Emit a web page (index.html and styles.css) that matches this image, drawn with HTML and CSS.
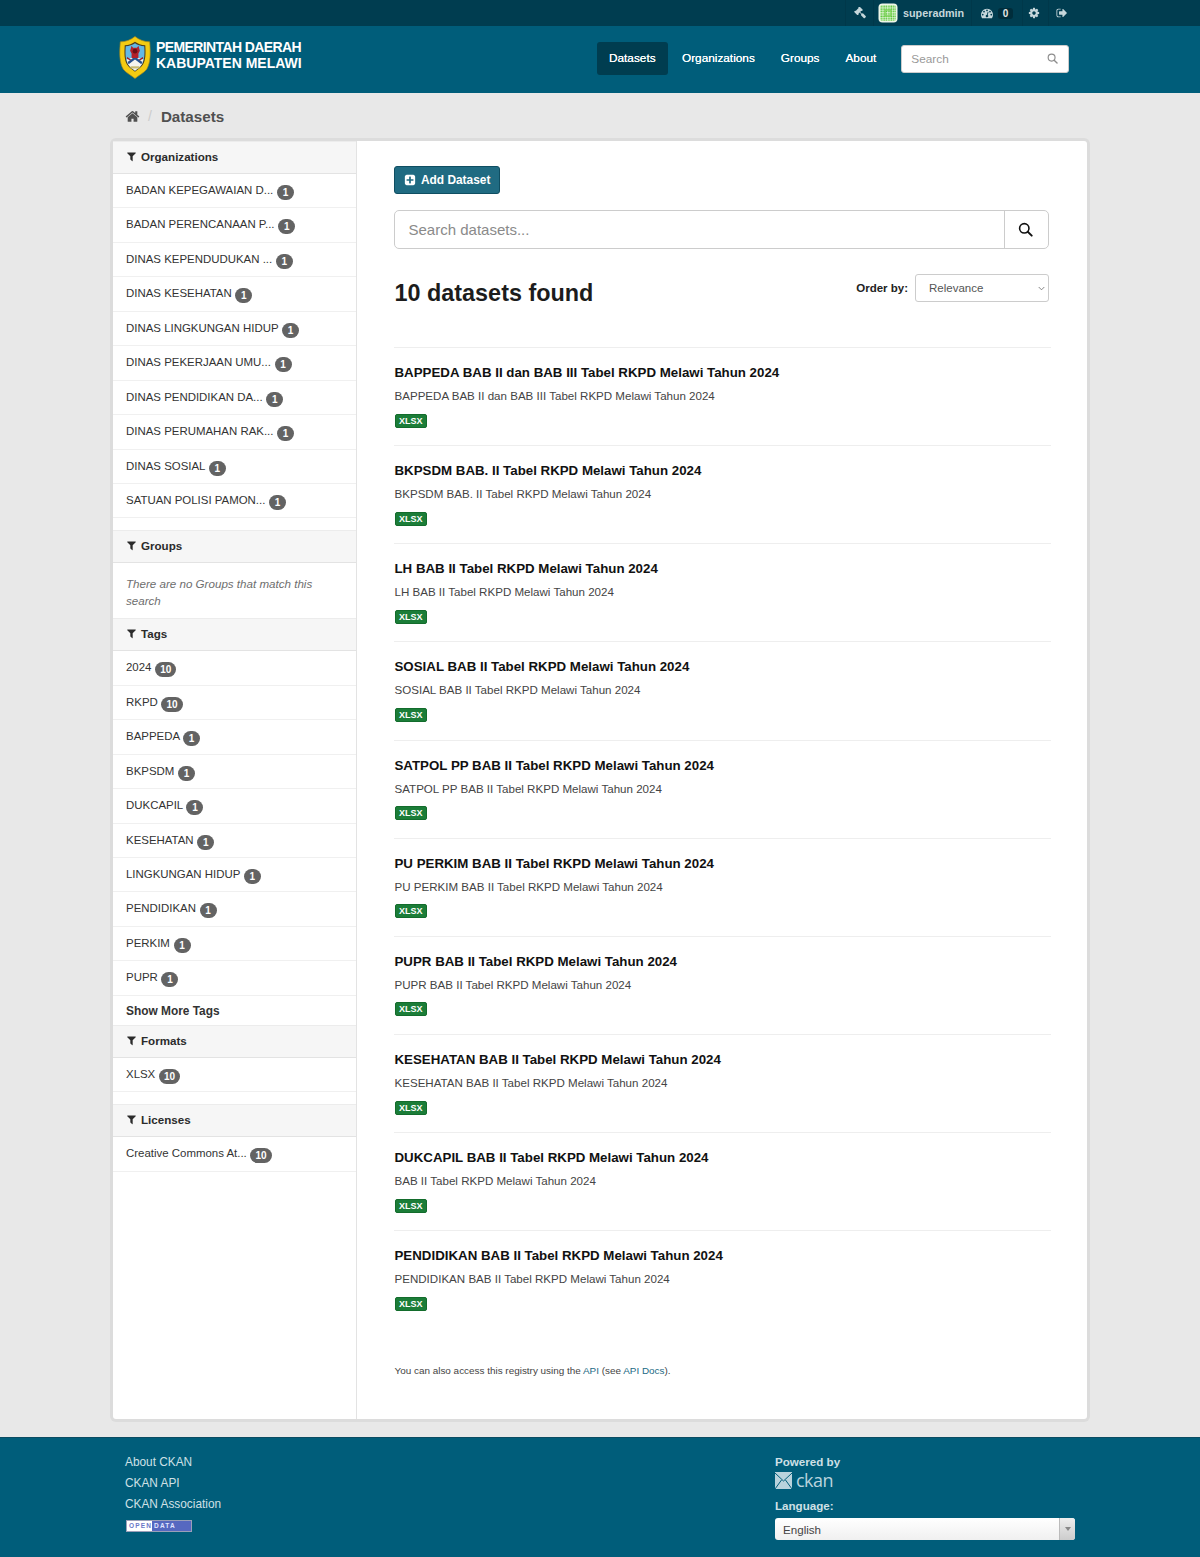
FILE: index.html
```html
<!DOCTYPE html>
<html lang="en">
<head>
<meta charset="utf-8">
<title>Datasets</title>
<link rel="stylesheet" href="styles.css">
</head>
<body>
<svg class="sprite" xmlns="http://www.w3.org/2000/svg">
<symbol id="i-filter" viewBox="0 0 1792 1792"><path d="M1595 295q17 41-14 70l-493 493v742q0 42-39 59-13 5-25 5-27 0-45-19l-256-256q-19-19-19-45v-486l-493-493q-31-29-14-70 17-39 59-39h1280q42 0 59 39z"/></symbol>
<symbol id="i-home" viewBox="0 0 1792 1792"><path d="M1472 992v480q0 26-19 45t-45 19h-384v-384h-256v384h-384q-26 0-45-19t-19-45v-480q0-1 .5-3t.5-3l575-474 575 474q1 2 1 6zm223-69l-62 74q-8 9-21 11h-3q-13 0-21-7l-692-577-692 577q-12 8-24 7-13-2-21-11l-62-74q-8-10-7-23.500t11-21.500l719-599q32-26 76-26t76 26l244 204v-195q0-14 9-23t23-9h192q14 0 23 9t9 23v408l219 182q10 8 11 21.500t-7 23.500z"/></symbol>
<symbol id="i-plus" viewBox="0 0 1792 1792"><path d="M1408 960v-128q0-26-19-45t-45-19h-320v-320q0-26-19-45t-45-19h-128q-26 0-45 19t-19 45v320h-320q-26 0-45 19t-19 45v128q0 26 19 45t45 19h320v320q0 26 19 45t45 19h128q26 0 45-19t19-45v-320h320q26 0 45-19t19-45zm256-544v960q0 119-84.500 203.500t-203.500 84.500h-960q-119 0-203.500-84.500t-84.500-203.500v-960q0-119 84.500-203.500t203.500-84.500h960q119 0 203.500 84.500t84.500 203.500z"/></symbol>
<symbol id="i-cog" viewBox="0 0 1792 1792"><path d="M1152 896q0-106-75-181t-181-75-181 75-75 181 75 181 181 75 181-75 75-181zm512-109v222q0 12-8 23t-20 13l-185 28q-19 54-39 91 35 50 107 138 10 12 10 25t-9 23q-27 37-99 108t-94 71q-12 0-26-9l-138-108q-44 23-91 38-16 136-29 186-7 28-36 28h-222q-14 0-24.500-8.500t-11.500-21.500l-28-184q-49-16-90-37l-141 107q-10 9-25 9-14 0-25-11-126-114-165-168-7-10-7-23 0-12 8-23 15-21 51-66.500t54-70.500q-27-50-41-99l-183-27q-13-2-21-12.500t-8-23.500v-222q0-12 8-23t19-13l186-28q14-46 39-92-40-57-107-138-10-12-10-24 0-10 9-23 26-36 98.500-107.500t94.500-71.500q13 0 26 10l138 107q44-23 91-38 16-136 29-186 7-28 36-28h222q14 0 24.500 8.500t11.500 21.500l28 184q49 16 90 37l142-107q9-9 24-9 13 0 25 10 129 119 165 170 7 8 7 22 0 12-8 23-15 21-51 66.500t-54 70.500q26 50 41 98l183 28q13 2 21 12.500t8 23.500z"/></symbol>
<symbol id="i-signout" viewBox="0 0 1792 1792"><path d="M704 1440q0 4 1 20t.5 26.500-3 23.500-10 19.500-20.500 6.500h-320q-119 0-203.500-84.500t-84.500-203.500v-704q0-119 84.500-203.500t203.500-84.500h320q13 0 22.500 9.500t9.500 22.500q0 4 1 20t.5 26.500-3 23.500-10 19.500-20.500 6.500h-320q-66 0-113 47t-47 113v704q0 66 47 113t113 47h312l11.500 1 11.500 3 8 5.500 7 9 2 13.500zm928-544q0 26-19 45l-544 544q-19 19-45 19t-45-19-19-45v-288h-448q-26 0-45-19t-19-45v-384q0-26 19-45t45-19h448v-288q0-26 19-45t45-19 45 19l544 544q19 19 19 45z"/></symbol>
<symbol id="i-dash" viewBox="0 0 1792 1792"><path d="M384 1152q0-53-37.500-90.500t-90.500-37.500-90.500 37.500-37.500 90.500 37.500 90.500 90.500 37.500 90.500-37.500 37.500-90.500zm192-448q0-53-37.500-90.500t-90.500-37.500-90.500 37.500-37.500 90.500 37.500 90.500 90.500 37.500 90.500-37.500 37.500-90.500zm428 481l101-382q6-26-7.500-48.500t-38.500-29.500-48 6.500-30 39.500l-101 382q-60 5-107 43.500t-63 98.500q-20 77 20 146t117 89 146-20 89-117q16-60-6-117t-72-91zm660-33q0-53-37.500-90.500t-90.500-37.500-90.500 37.500-37.500 90.500 37.500 90.500 90.500 37.500 90.500-37.500 37.500-90.500zm-640-640q0-53-37.500-90.500t-90.500-37.500-90.500 37.500-37.500 90.500 37.500 90.500 90.500 37.500 90.500-37.500 37.500-90.500zm448 192q0-53-37.500-90.500t-90.500-37.500-90.500 37.500-37.500 90.500 37.500 90.500 90.500 37.500 90.500-37.500 37.500-90.500zm320 448q0 261-141 483-19 29-54 29h-1402q-35 0-54-29-141-221-141-483 0-182 71-348t191-286 286-191 348-71 348 71 286 191 191 286 71 348z"/></symbol>
<symbol id="i-gavel" viewBox="0 0 1792 1792"><path d="M1771 1440q0 53-37 90l-107 108q-39 37-91 37-53 0-90-37l-363-364q-38-36-38-90 0-53 43-96l-256-256-126 126q-14 14-34 14t-34-14q2 2 12.500 12t12.500 13 10 11.500 10 13.500 6 13.500 5.500 16.500 1.500 18q0 38-28 68-3 3-16.500 18t-19 20.500-18.500 16.500-22 15.500-22 9-26 4.500q-40 0-68-28l-408-408q-28-28-28-68 0-13 4.500-26t9-22 15.500-22 16.500-18.500 20.500-19 18-16.500q30-28 68-28 10 0 18 1.500t16.500 5.500 13.500 6 13.500 10 11.500 10 13 12.500 12 12.500q-14-14-14-34t14-34l348-348q14-14 34-14t34 14q-2-2-12.500-12t-12.500-13-10-11.500-10-13.500-6-13.500-5.500-16.500-1.500-18q0-38 28-68 3-3 16.500-18t19-20.500 18.500-16.500 22-15.500 22-9 26-4.500q40 0 68 28l408 408q28 28 28 68 0 13-4.500 26t-9 22-15.500 22-16.500 18.500-20.500 19-18 16.500q-30 28-68 28-10 0-18-1.500t-16.500-5.500-13.500-6-13.500-10-11.500-10-13-12.500-12-12.500q14 14 14 34t-14 34l-126 126 256 256q43-43 96-43 52 0 91 37l363 363q37 39 37 91z"/></symbol>
<symbol id="i-search" viewBox="0 0 16 16"><circle cx="6.700" cy="6.700" r="5" fill="none" stroke="currentColor" stroke-width="1.700"/><path d="M10.400 10.400L14.600 14.600" fill="none" stroke="currentColor" stroke-width="2" stroke-linecap="round"/></symbol>
</svg>

<div class="account-bar">
  <div class="account-item"><svg class="ico ico-bar"><use href="#i-gavel"/></svg></div>
  <div class="account-item account-user">
    <svg class="avatar" viewBox="0 0 20 20">
      <defs><pattern id="dots" width="2.400" height="2.400" patternUnits="userSpaceOnUse" x="0.300" y="0.300"><rect width="2.400" height="2.400" fill="#f3fbec"/><rect x="0.300" y="0.300" width="1.600" height="1.600" fill="#3fbb1a"/></pattern></defs>
      <rect x=".5" y=".5" width="19" height="19" rx="4" fill="#eef6e8"/>
      <rect x="2" y="2" width="16" height="16" rx="2" fill="url(#dots)"/>
      <rect x="7" y="7" width="6" height="6" fill="none" stroke="#7fd45a" stroke-width="1.400"/>
    </svg>
    <span>superadmin</span>
  </div>
  <div class="account-item account-dash"><svg class="ico ico-bar"><use href="#i-dash"/></svg><span class="count">0</span></div>
  <div class="account-item account-cog"><svg class="ico ico-bar"><use href="#i-cog"/></svg></div>
  <div class="account-item account-out"><svg class="ico ico-bar"><use href="#i-signout"/></svg></div>
</div>

<header class="masthead">
  <div class="brand">
    <svg class="logo" viewBox="0 0 32 44">
      <path d="M1 6C6 6 12 4 16 .5c4 3.500 10 5.500 15 5.500 1 12 1 21-3 28-3 4-8 6-12 9.500-4-3.500-9-5.500-12-9.500C0 27 0 18 1 6z" fill="#f4cb12" stroke="#a98a1a" stroke-width=".7"/>
      <path d="M5.500 9.500c4 0 8-1.500 10.500-3.500 2.500 2 6.500 3.500 10.500 3.500 .5 9 .5 15-2.500 20-2 3-5 5-8 7-3-2-6-4-8-7-3-5-3-11-2.500-20z" fill="#4a3a1c"/>
      <path d="M6.500 10.500c3.500 0 7-1.300 9.500-3 2.500 1.700 6 3 9.500 3 .5 8 .3 14-2.400 18.500-1.900 3-4.500 4.800-7.100 6.500-2.600-1.700-5.200-3.500-7.100-6.500C6.200 24.500 6 18.500 6.500 10.500z" fill="#63b8e6"/>
      <path d="M7.500 24l8.500-3 8.500 3c-.4 2-.9 3.400-1.400 5-1.900 3-4.500 4.800-7.100 6.500-2.600-1.700-5.200-3.500-7.100-6.500-.5-1.600-1-3-1.400-5z" fill="#f6f3ee"/>
      <path d="M16 21l-7.500 5.500 1 2.500L16 24l6.500 5 1-2.500z" fill="#26508f"/>
      <path d="M8 21.500l4 2.500-1 1-3.500-2zM24 21.500l-4 2.500 1 1 3.500-2z" fill="#9c1f2a"/>
      <path d="M12.500 10l1.500 2h4l1.500-2 1.500 5-1.500 3v4.500h-7V18l-1.500-3z" fill="#b3202a"/>
      <circle cx="16" cy="15.500" r="2.400" fill="#6b0f18"/>
      <path d="M11.500 31h9v2.200h-9z" fill="#caba72"/>
    </svg>
    <div class="brand-text"><span class="brand-line1">PEMERINTAH DAERAH</span><br>KABUPATEN MELAWI</div>
  </div>
  <nav class="nav">
    <a class="nav-link nav-active">Datasets</a>
    <a class="nav-link">Organizations</a>
    <a class="nav-link">Groups</a>
    <a class="nav-link">About</a>
  </nav>
  <div class="site-search"><span>Search</span><svg class="ico ico-site"><use href="#i-search"/></svg></div>
</header>

<div class="page">
  <div class="crumbs">
    <svg class="ico ico-home"><use href="#i-home"/></svg>
    <span class="crumb-sep">/</span>
    <span class="crumb-current">Datasets</span>
  </div>

  <div class="wrapper">
    <aside class="sidebar">
      <h2 class="facet-head"><svg class="ico ico-filter"><use href="#i-filter"/></svg>Organizations</h2>
      <ul class="facet-list">
        <li class="facet-item">BADAN KEPEGAWAIAN D... <b class="pill">1</b></li>
        <li class="facet-item">BADAN PERENCANAAN P... <b class="pill">1</b></li>
        <li class="facet-item">DINAS KEPENDUDUKAN ... <b class="pill">1</b></li>
        <li class="facet-item">DINAS KESEHATAN <b class="pill">1</b></li>
        <li class="facet-item">DINAS LINGKUNGAN HIDUP <b class="pill">1</b></li>
        <li class="facet-item">DINAS PEKERJAAN UMU... <b class="pill">1</b></li>
        <li class="facet-item">DINAS PENDIDIKAN DA... <b class="pill">1</b></li>
        <li class="facet-item">DINAS PERUMAHAN RAK... <b class="pill">1</b></li>
        <li class="facet-item">DINAS SOSIAL <b class="pill">1</b></li>
        <li class="facet-item">SATUAN POLISI PAMON... <b class="pill">1</b></li>
      </ul>
      <h2 class="facet-head facet-spaced"><svg class="ico ico-filter"><use href="#i-filter"/></svg>Groups</h2>
      <p class="facet-empty">There are no Groups that match this search</p>
      <h2 class="facet-head"><svg class="ico ico-filter"><use href="#i-filter"/></svg>Tags</h2>
      <ul class="facet-list">
        <li class="facet-item">2024 <b class="pill">10</b></li>
        <li class="facet-item">RKPD <b class="pill">10</b></li>
        <li class="facet-item">BAPPEDA <b class="pill">1</b></li>
        <li class="facet-item">BKPSDM <b class="pill">1</b></li>
        <li class="facet-item">DUKCAPIL <b class="pill">1</b></li>
        <li class="facet-item">KESEHATAN <b class="pill">1</b></li>
        <li class="facet-item">LINGKUNGAN HIDUP <b class="pill">1</b></li>
        <li class="facet-item">PENDIDIKAN <b class="pill">1</b></li>
        <li class="facet-item">PERKIM <b class="pill">1</b></li>
        <li class="facet-item">PUPR <b class="pill">1</b></li>
      </ul>
      <div class="show-more">Show More Tags</div>
      <h2 class="facet-head"><svg class="ico ico-filter"><use href="#i-filter"/></svg>Formats</h2>
      <ul class="facet-list">
        <li class="facet-item">XLSX <b class="pill">10</b></li>
      </ul>
      <h2 class="facet-head facet-spaced"><svg class="ico ico-filter"><use href="#i-filter"/></svg>Licenses</h2>
      <ul class="facet-list">
        <li class="facet-item">Creative Commons At... <b class="pill">10</b></li>
      </ul>
    </aside>

    <main class="content">
      <a class="add-btn"><svg class="ico ico-plus"><use href="#i-plus"/></svg>Add Dataset</a>
      <div class="search-box">
        <span class="search-ph">Search datasets...</span>
        <span class="search-go"><svg class="ico ico-go"><use href="#i-search"/></svg></span>
      </div>
      <div class="results-head">
        <h1 class="results-title">10 datasets found</h1>
        <div class="order">
          <label class="order-label">Order by:</label>
          <div class="order-select">Relevance<svg class="chev" viewBox="0 0 8 5"><path d="M.8 .8L4 4l3.200-3.200" fill="none" stroke="#666" stroke-width=".9"/></svg></div>
        </div>
      </div>

      <article class="dataset"><h3 class="ds-title">BAPPEDA BAB II dan BAB III Tabel RKPD Melawi Tahun 2024</h3><p class="ds-desc">BAPPEDA BAB II dan BAB III Tabel RKPD Melawi Tahun 2024</p><span class="ds-badge">XLSX</span></article>
      <article class="dataset"><h3 class="ds-title">BKPSDM BAB. II Tabel RKPD Melawi Tahun 2024</h3><p class="ds-desc">BKPSDM BAB. II Tabel RKPD Melawi Tahun 2024</p><span class="ds-badge">XLSX</span></article>
      <article class="dataset"><h3 class="ds-title">LH BAB II Tabel RKPD Melawi Tahun 2024</h3><p class="ds-desc">LH BAB II Tabel RKPD Melawi Tahun 2024</p><span class="ds-badge">XLSX</span></article>
      <article class="dataset"><h3 class="ds-title">SOSIAL BAB II Tabel RKPD Melawi Tahun 2024</h3><p class="ds-desc">SOSIAL BAB II Tabel RKPD Melawi Tahun 2024</p><span class="ds-badge">XLSX</span></article>
      <article class="dataset"><h3 class="ds-title">SATPOL PP BAB II Tabel RKPD Melawi Tahun 2024</h3><p class="ds-desc">SATPOL PP BAB II Tabel RKPD Melawi Tahun 2024</p><span class="ds-badge">XLSX</span></article>
      <article class="dataset"><h3 class="ds-title">PU PERKIM BAB II Tabel RKPD Melawi Tahun 2024</h3><p class="ds-desc">PU PERKIM BAB II Tabel RKPD Melawi Tahun 2024</p><span class="ds-badge">XLSX</span></article>
      <article class="dataset"><h3 class="ds-title">PUPR BAB II Tabel RKPD Melawi Tahun 2024</h3><p class="ds-desc">PUPR BAB II Tabel RKPD Melawi Tahun 2024</p><span class="ds-badge">XLSX</span></article>
      <article class="dataset"><h3 class="ds-title">KESEHATAN BAB II Tabel RKPD Melawi Tahun 2024</h3><p class="ds-desc">KESEHATAN BAB II Tabel RKPD Melawi Tahun 2024</p><span class="ds-badge">XLSX</span></article>
      <article class="dataset"><h3 class="ds-title">DUKCAPIL BAB II Tabel RKPD Melawi Tahun 2024</h3><p class="ds-desc">BAB II Tabel RKPD Melawi Tahun 2024</p><span class="ds-badge">XLSX</span></article>
      <article class="dataset"><h3 class="ds-title">PENDIDIKAN BAB II Tabel RKPD Melawi Tahun 2024</h3><p class="ds-desc">PENDIDIKAN BAB II Tabel RKPD Melawi Tahun 2024</p><span class="ds-badge">XLSX</span></article>

      <p class="api-note">You can also access this registry using the <a class="api-link">API</a> (see <a class="api-link">API Docs</a>).</p>
    </main>
  </div>
</div>

<footer class="footer">
  <div class="foot-left">
    <a class="foot-link">About CKAN</a>
    <a class="foot-link">CKAN API</a>
    <a class="foot-link">CKAN Association</a>
    <div class="od-badge"><span class="od-open">OPEN</span><span class="od-data">DATA</span></div>
  </div>
  <div class="foot-right">
    <div class="foot-label">Powered by</div>
    <div class="ckan-logo">
      <svg class="ckan-mark" viewBox="0 0 17 17"><rect width="17" height="17" fill="#b9d3dd"/><path d="M0 1l8.500 8L17 1M0 17l6.500-9M17 17l-6.500-9" fill="none" stroke="#005d7a" stroke-width="1"/></svg>
      <span class="ckan-word">ckan</span>
    </div>
    <div class="foot-label foot-lang">Language:</div>
    <div class="lang-select"><span class="lang-value">English</span><span class="lang-arrow"><i class="tri"></i></span></div>
  </div>
</footer>
</body>
</html>
```

FILE: styles.css
```css
* { box-sizing: border-box; }
html, body { margin: 0; padding: 0; }
body {
  width: 1200px;
  height: 1557px;
  overflow: hidden;
  background: #e8e8e8;
  font-family: "Liberation Sans", Arial, sans-serif;
  font-size: 12px;
  color: #333;
}
.sprite { display: none; }
.ico { display: block; fill: currentColor; flex: none; }

.account-bar {
  height: 26px;
  background: #003d50;
  display: flex;
  justify-content: flex-end;
  padding-right: 125px;
  color: #c6d7db;
}
.account-item {
  height: 26px;
  display: flex;
  align-items: center;
  justify-content: center;
  border-left: 1px solid #00384a;
  width: 28px;
}
.account-user { width: 98px; justify-content: flex-start; padding-left: 4px; gap: 5px; font-size: 10.800px; font-weight: bold; }
.account-dash { width: 51px; gap: 5px; }
.account-cog { width: 26px; padding-right: 3px; }
.account-out { width: 27px; }
.ico-bar { width: 12px; height: 12px; }
.avatar { width: 20px; height: 20px; display: block; }
.count { background: #002d3b; color: #e6e6e6; font-size: 10px; font-weight: bold; border-radius: 3px; width: 15px; height: 11px; line-height: 11px; text-align: center; margin-top: 1px; }

.masthead {
  height: 67px;
  background: #005d7a;
  display: flex;
  align-items: flex-start;
  padding-left: 119px;
  color: #fff;
}
.brand { display: flex; align-items: flex-start; gap: 5px; width: 478px; margin-top: 10px; }
.logo { width: 32px; height: 43px; display: block; }
.brand-text { margin-top: 3px; font-size: 14px; line-height: 16px; font-weight: bold; color: #fff; white-space: nowrap; }
.brand-line1 { letter-spacing: -.6px; }
.nav { display: flex; gap: 0; align-items: center; margin-top: 16px; }
.nav-link {
  display: block;
  height: 33px;
  line-height: 33px;
  padding: 0 13px;
  border-radius: 3px;
  font-size: 11.800px;
  color: #fff;
  text-shadow: 0 0 .5px #fff;
}
.nav-active { background: #003d50; padding: 0 12px; margin-right: 1px; width: 71px; }
.site-search {
  margin: 19px 0 0 12px;
  width: 168px;
  height: 28px;
  background: #fff;
  border: 1px solid #ccc;
  border-radius: 3px;
  display: flex;
  align-items: center;
  justify-content: space-between;
  padding: 0 10px 1px 9px;
  color: #999;
  font-size: 11.800px;
}
.ico-site { width: 11px; height: 11px; color: #8d8d8d; }

.page { height: 1344px; width: 974px; margin-left: 113px; }
.crumbs { height: 48px; display: flex; align-items: center; padding: 0 0 2px 12px; }
.ico-home { width: 15px; height: 15px; color: #505050; }
.crumb-sep { color: #ccc; font-size: 14px; margin: 0 9px 0 8px; }
.crumb-current { font-size: 15.200px; font-weight: bold; color: #505050; }

.wrapper {
  height: 1278px;
  background: #fff;
  border-radius: 3px;
  box-shadow: 0 0 0 3px #dcdcdc;
  display: flex;
}
.sidebar { width: 244px; border-right: 1px solid #e3e3e3; flex: none; }
.facet-head {
  margin: 0;
  height: 33px;
  background: #f6f6f6;
  border-top: 1px solid #ececec;
  border-bottom: 1px solid #e3e3e3;
  padding: 0 0 2px 13px;
  display: flex;
  align-items: center;
  font-size: 11.600px;
  font-weight: bold;
  color: #2b2b2b;
}
.ico-filter { width: 11px; height: 11px; margin-right: 4px; color: #2b2b2b; }
.facet-spaced { margin-top: 12px; }
.facet-list { list-style: none; margin: 0; padding: 0; }
.facet-item {
  height: 34.440px;
  line-height: 32px;
  padding-left: 13px;
  border-bottom: 1px solid #f0f0f0;
  font-size: 11.450px;
  color: #333;
  white-space: nowrap;
}
.pill {
  display: inline-block;
  min-width: 17px;
  height: 15px;
  line-height: 15px;
  padding: 0 5px;
  margin-left: .5px;
  border-radius: 8px;
  background: #636363;
  color: #fff;
  font-size: 10px;
  text-align: center;
  vertical-align: -4px;
  position: relative;
  top: -2px;
}
.facet-empty {
  margin: 0;
  height: 55px;
  padding: 11.500px 13px 0;
  font-size: 11.600px;
  line-height: 17px;
  font-style: italic;
  color: #6e6e6e;
}
.show-more { height: 29px; line-height: 30px; padding-left: 13px; font-size: 11.900px; font-weight: bold; color: #333; }

.content { flex: 1; padding: 25px 38px 0 37px; min-width: 0; }
.add-btn {
  display: flex;
  align-items: center;
  width: 106px;
  height: 28px;
  padding-left: 9px;
  background: #206b82;
  border: 1px solid #0f4e62;
  border-radius: 3px;
  color: #fff;
  font-size: 11.900px;
  font-weight: bold;
}
.ico-plus { width: 12px; height: 12px; margin-right: 5px; }
.search-box {
  margin-top: 16px;
  height: 39px;
  border: 1px solid #ccc;
  border-radius: 5px;
  display: flex;
  align-items: center;
  justify-content: space-between;
}
.search-ph { padding-left: 13.500px; font-size: 15px; color: #8a8a8a; }
.search-go { width: 44px; height: 37px; border-left: 1px solid #ccc; display: flex; align-items: center; justify-content: center; padding-right: 2px; }
.ico-go { width: 15px; height: 15px; color: #111; }
.results-head { margin-top: 25px; height: 73px; display: flex; justify-content: space-between; align-items: flex-start; padding-left: .5px; }
.results-title { margin: 3.500px 0 0; font-size: 23.400px; line-height: 30px; font-weight: bold; color: #1c1c1c; }
.order { display: flex; align-items: center; gap: 7px; }
.order-label { font-size: 11.500px; font-weight: bold; color: #222; }
.order-select {
  width: 134px;
  height: 28px;
  border: 1px solid #ccc;
  border-radius: 3px;
  padding-left: 13px;
  line-height: 27px;
  font-size: 11.500px;
  color: #555;
  position: relative;
}
.chev { position: absolute; right: 3px; top: 11px; width: 7px; height: 5px; }

.dataset { height: 98.170px; border-top: 1px solid #eee; padding: 15px 0 0 .5px; margin-right: -2px; }
.ds-title { margin: 0; font-size: 13.300px; line-height: 20px; font-weight: bold; color: #111; }
.ds-desc { margin: 3px 0 0; font-size: 11.570px; line-height: 20px; color: #444; }
.ds-badge {
  display: block;
  margin-top: 7.500px;
  width: 32.500px;
  height: 14px;
  background: #1b7d38;
  border: 1px solid #136c2c;
  border-radius: 2px;
  color: #fff;
  font-size: 9px;
  line-height: 12px;
  font-weight: bold;
  text-align: center;
}
.api-note { margin: 35px 0 0; padding-left: .5px; font-size: 9.920px; line-height: 14px; color: #444; }
.api-link { color: #1c6a85; }

.footer {
  height: 120px;
  background: #005d7a;
  border-top: 1px solid #0b4c62;
  display: flex;
  color: #cfe0e6;
  padding: 14px 0 0 125px;
}
.foot-left { width: 650px; display: flex; flex-direction: column; }
.foot-link { display: block; height: 21px; line-height: 21px; font-size: 11.850px; color: #cfe0e6; }
.od-badge {
  margin: 5px 0 0 1px;
  width: 66px;
  height: 12px;
  background: #fff;
  border: 1px solid #9a9fb8;
  display: flex;
  font-size: 6.500px;
  line-height: 10px;
  font-weight: bold;
  letter-spacing: 1.200px;
}
.od-open { width: 25px; color: #6a78c8; padding-left: 2px; }
.od-data { flex: 1; background: #5668c0; color: #e0e4ff; padding-left: 2px; }
.foot-right { width: 300px; margin-top: -1px; }
.foot-label { font-size: 11.600px; line-height: 21px; font-weight: bold; color: #cfe0e6; }
.ckan-logo { display: flex; align-items: center; gap: 4px; height: 17px; }
.ckan-mark { width: 17px; height: 17px; display: block; }
.ckan-word { font-family: "Open Sans", sans-serif; font-size: 18px; line-height: 17px; letter-spacing: -.5px; color: #b9d3dd; }
.foot-lang { margin-top: 6px; }
.lang-select {
  margin-top: 2px;
  height: 22px;
  background: linear-gradient(#fff, #f0f0f0);
  border-radius: 3px;
  display: flex;
  align-items: center;
  justify-content: space-between;
  font-size: 11.600px;
  color: #444;
}
.lang-value { padding: 1px 0 0 8px; }
.lang-arrow { width: 16px; height: 22px; border-left: 1px solid #bbb; background: linear-gradient(#eee, #ccc); border-radius: 0 3px 3px 0; display: flex; align-items: center; justify-content: center; }
.tri { display: block; width: 0; height: 0; border: 3px solid transparent; border-top: 4px solid #888; border-bottom: 0; }
```
